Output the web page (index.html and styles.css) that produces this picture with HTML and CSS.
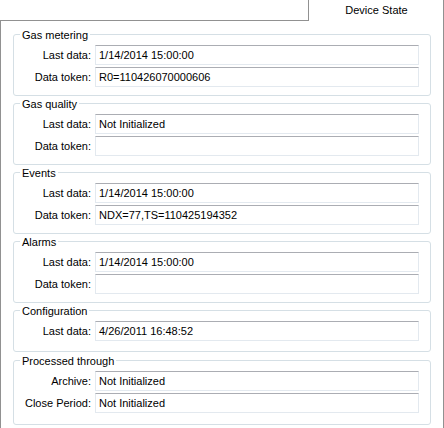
FILE: index.html
```html
<!DOCTYPE html>
<html>
<head>
<meta charset="utf-8">
<link rel="stylesheet" href="styles.css">
</head>
<body>
<div class="tabs">
  <div class="tab-spacer"></div>
  <div class="tab">Device State</div>
</div>
<div class="panel">
  <div class="group">
    <div class="group-title">Gas metering</div>
    <div class="rows">
      <div class="lbl">Last data:</div><div class="field">1/14/2014 15:00:00</div>
      <div class="lbl">Data token:</div><div class="field">R0=110426070000606</div>
    </div>
  </div>
  <div class="group">
    <div class="group-title">Gas quality</div>
    <div class="rows">
      <div class="lbl">Last data:</div><div class="field">Not Initialized</div>
      <div class="lbl">Data token:</div><div class="field"></div>
    </div>
  </div>
  <div class="group">
    <div class="group-title">Events</div>
    <div class="rows">
      <div class="lbl">Last data:</div><div class="field">1/14/2014 15:00:00</div>
      <div class="lbl">Data token:</div><div class="field">NDX=77,TS=110425194352</div>
    </div>
  </div>
  <div class="group">
    <div class="group-title">Alarms</div>
    <div class="rows">
      <div class="lbl">Last data:</div><div class="field">1/14/2014 15:00:00</div>
      <div class="lbl">Data token:</div><div class="field"></div>
    </div>
  </div>
  <div class="group group-single">
    <div class="group-title">Configuration</div>
    <div class="rows">
      <div class="lbl">Last data:</div><div class="field">4/26/2011 16:48:52</div>
    </div>
  </div>
  <div class="group group-last">
    <div class="group-title">Processed through</div>
    <div class="rows">
      <div class="lbl">Archive:</div><div class="field">Not Initialized</div>
      <div class="lbl">Close Period:</div><div class="field">Not Initialized</div>
    </div>
  </div>
</div>
</body>
</html>
```
FILE: styles.css
```css
html, body {
  margin: 0;
  padding: 0;
  background: #ffffff;
}
body {
  width: 444px;
  height: 428px;
  overflow: hidden;
  font-family: "Liberation Sans", Arial, sans-serif;
  font-size: 11px;
  color: #000000;
}
.tabs {
  display: flex;
  height: 21px;
}
.tab-spacer {
  width: 308px;
  border-bottom: 1px solid #919191;
}
.tab {
  flex: 1;
  border-left: 1px solid #919191;
  border-right: 1px solid #919191;
  text-align: center;
  line-height: 20px;
  padding-left: 1px;
}
.panel {
  border-left: 1px solid #919191;
  border-right: 1px solid #919191;
  padding: 13px 12px 20px 12px;
}
.group {
  border: 1px solid #d5dfe5;
  border-radius: 3px;
  margin-top: 7px;
  padding: 0 11px 8px 0;
}
.group:first-child {
  margin-top: 0;
}
.group-single {
  padding-bottom: 10px;
}
.group-last {
  margin-top: 8px;
  padding-bottom: 11px;
}
.group-title {
  display: table;
  margin: -6px 0 0 6px;
  padding: 0 2px;
  line-height: 13px;
  background: #ffffff;
}
.rows {
  display: grid;
  grid-template-columns: 77px 1fr;
  column-gap: 4px;
  row-gap: 2px;
  margin-top: 3px;
}
.lbl {
  text-align: right;
  line-height: 20px;
  white-space: nowrap;
}
.field {
  height: 18px;
  line-height: 18px;
  border: 1px solid #e3e9ef;
  border-top-color: #abadb3;
  padding-left: 3px;
  white-space: nowrap;
}
```
